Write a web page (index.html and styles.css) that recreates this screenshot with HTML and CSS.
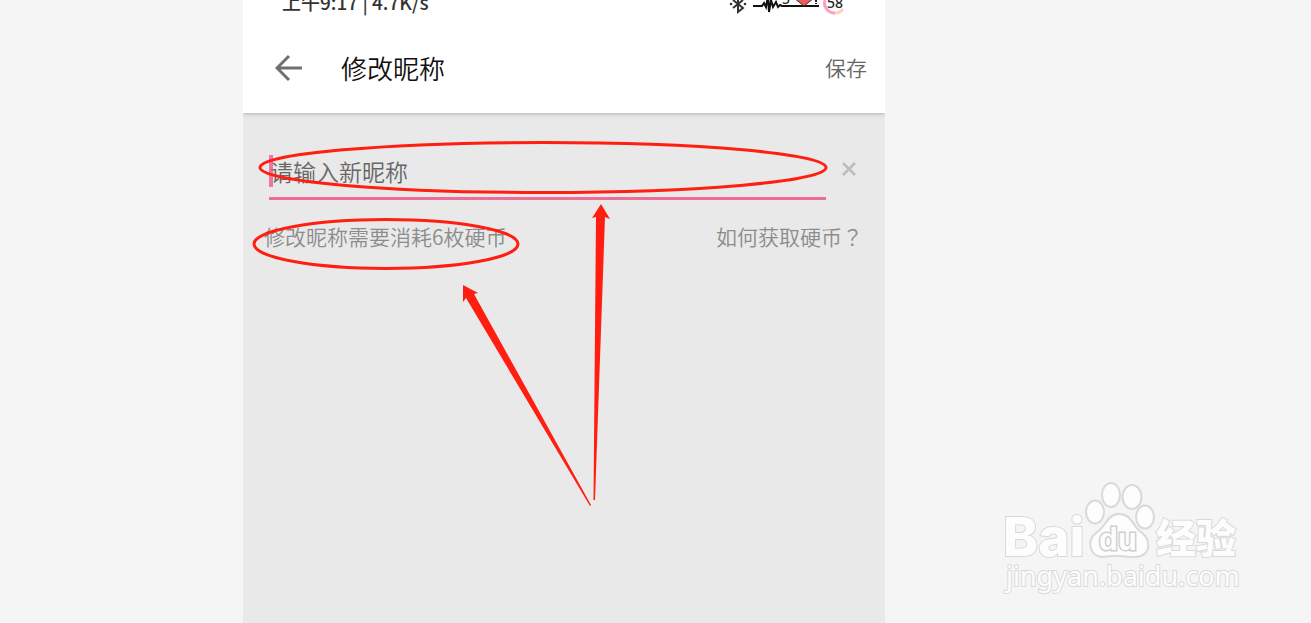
FILE: index.html
```html
<!DOCTYPE html>
<html lang="zh-CN">
<head>
  <meta charset="utf-8">
  <title>修改昵称</title>
  <link rel="stylesheet" href="styles.css">
</head>
<body>
  <main class="phone">
    <div class="top">
      <div class="status-bar">
        <span>上午9:17 | 4.7K/s</span>
        <svg class="status-icons" width="120" height="18" viewBox="0 0 120 18">
          <path d="M4 0L14 8L9 12V0M14 0L4 8" fill="none" stroke="#333" stroke-width="2"/>
          <circle cx="2" cy="4" r="1.3" fill="#333"/>
          <circle cx="16" cy="4" r="1.3" fill="#333"/>
          <path d="M24 6H33L35 3L37 7L39 -4L40 12L42 0L44 7L47 2L49 7L51 5L53 6H90" fill="none" stroke="#111" stroke-width="2"/>
          <path d="M65 -2H85L75 6Z" fill="#f05a5a" stroke="#333" stroke-width="1"/>
          <text x="53" y="4" class="icon-num">5</text>
          <path d="M87 0V4" stroke="#222" stroke-width="2" stroke-dasharray="2 1"/>
          <path d="M96 0A10 10 0 0 0 106 13" fill="none" stroke="#ff9fc0" stroke-width="3"/>
          <path d="M106 13A10 10 0 0 0 114 9" fill="none" stroke="#ffd2bd" stroke-width="3"/>
          <text x="98" y="8" class="icon-num">58</text>
        </svg>
      </div>
      <header class="header">
        <button class="back" aria-label="返回">
          <svg width="28" height="28" viewBox="0 0 28 28">
            <path d="M27 14H2M14 2L2 14L14 26" fill="none" stroke="#707070" stroke-width="3"/>
          </svg>
        </button>
        <h1>修改昵称</h1>
        <button class="save">保存</button>
      </header>
    </div>

    <form class="form">
      <div class="field">
        <input type="text" id="nickname" placeholder="请输入新昵称" aria-label="新昵称">
        <span class="caret"></span>
        <button type="button" class="clear" aria-label="清空">
          <svg width="14" height="14" viewBox="0 0 14 14">
            <path d="M1 1L13 13M13 1L1 13" stroke="#bdbdbd" stroke-width="2.6"/>
          </svg>
        </button>
      </div>
      <div class="hints">
        <label for="nickname">修改昵称需要消耗6枚硬币</label>
        <a href="#">如何获取硬币<span class="mark" lang="zh-Hant">？</span></a>
      </div>
    </form>

    <svg class="marks" viewBox="0 0 642 623">
      <ellipse cx="300" cy="167.500" rx="283" ry="25"/>
      <ellipse cx="143" cy="244" rx="132" ry="24.500"/>
      <path d="M358 204L367 219L362 217L352 500H350.500L353 217L349 218Z"/>
      <path d="M220 285L235 293L231 294L348 505L347 506L223 298L220 302Z"/>
    </svg>
  </main>

  <svg class="watermark" width="240" height="118" viewBox="0 0 240 118">
    <text x="3" y="78" class="brand">Bai</text>
    <ellipse cx="95" cy="34" rx="9" ry="11.500"/>
    <ellipse cx="111" cy="17" rx="9" ry="12"/>
    <ellipse cx="132" cy="19" rx="9.500" ry="12"/>
    <ellipse cx="145" cy="39" rx="9" ry="11.500"/>
    <path d="M119 36C107 36 106 49 96 55C86 63 90 78 102 79C109 79 113 77 120 78C128 79 134 80 141 78C151 74 150 61 142 55C132 48 132 36 119 36Z"/>
    <text x="99" y="72" class="du">du</text>
    <text x="156" y="75" class="jingyan">经验</text>
    <text x="6" y="108" class="site">jingyan.baidu.com</text>
  </svg>
</body>
</html>
```

FILE: styles.css
```css
* {
  box-sizing: border-box;
}
body {
  display: grid;
  grid-template-columns: 243fr 642fr 426fr;
  min-height: 100vh;
  margin: 0;
  background: #f5f5f5;
  font-family: "Noto Sans CJK SC", sans-serif;
  font-weight: 350;
  overflow: hidden;
}
button {
  padding: 0;
  border: none;
  background: none;
  font: inherit;
  cursor: pointer;
}
.phone {
  grid-column: 2;
  position: relative;
  background: #e9e9e9;
  overflow: hidden;
}
.top {
  background: #fff;
  box-shadow: 0 1px 4px rgba(0, 0, 0, 0.25);
}
.status-bar {
  display: flex;
  justify-content: space-between;
  height: 22px;
  padding: 0 36px 0 39px;
  color: #333;
  font-size: 19px;
  font-weight: 500;
  line-height: 4px;
}
.icon-num {
  font: 500 14px "Noto Sans", sans-serif;
  fill: #222;
}
.header {
  display: flex;
  align-items: center;
  height: 91px;
  padding: 0 18px 0 32px;
}
.back svg,
.clear svg {
  display: block;
}
h1 {
  flex: 1;
  margin: 0 0 0 38px;
  color: #111;
  font-size: 26px;
  font-weight: 350;
}
.save {
  color: #666;
  font-size: 21px;
  line-height: 30px;
  padding-bottom: 2px;
}
.form {
  padding: 32px 22px 0 21px;
}
.field {
  display: flex;
  align-items: center;
  position: relative;
  padding-left: 5px;
}
.field input {
  flex: 1;
  min-width: 0;
  height: 55px;
  padding: 0 0 0 1px;
  border: none;
  border-bottom: 3px solid #ec6d96;
  border-radius: 0;
  outline: none;
  background: none;
  color: #333;
  font: inherit;
  font-size: 23px;
}
.field input::placeholder {
  color: #666;
  opacity: 1;
}
.caret {
  position: absolute;
  top: 10px;
  left: 5px;
  width: 4px;
  height: 32px;
  background: rgba(236, 90, 140, 0.8);
}
.clear {
  margin-left: 16px;
  padding: 0 7px 8px 0;
}
.hints {
  display: flex;
  justify-content: space-between;
  margin-top: 21px;
  color: #8c8c8c;
  font-size: 21px;
  line-height: 30px;
}
.hints a {
  color: inherit;
  text-decoration: none;
}
.mark {
  font-family: "Noto Sans CJK TC", sans-serif;
}
.marks {
  position: absolute;
  top: 0;
  left: 0;
  width: 100%;
  fill: #ff1e10;
  pointer-events: none;
}
.marks ellipse {
  fill: none;
  stroke: #ff1e10;
  stroke-width: 3;
}
.watermark {
  position: absolute;
  right: 71px;
  bottom: 27px;
  fill: #fdfdfd;
  stroke: #d9d9d9;
  stroke-width: 2;
  overflow: visible;
}
.watermark text {
  paint-order: stroke;
}
.brand {
  font: 800 53px Inter, sans-serif;
}
.du {
  font: 700 31px "Liberation Sans", sans-serif;
}
.watermark .du {
  stroke: #cfcfcf;
  stroke-width: 3;
}
.jingyan {
  font: 900 40px "Noto Sans CJK SC", sans-serif;
}
.site {
  font: 400 27px "Noto Sans", sans-serif;
}
```
